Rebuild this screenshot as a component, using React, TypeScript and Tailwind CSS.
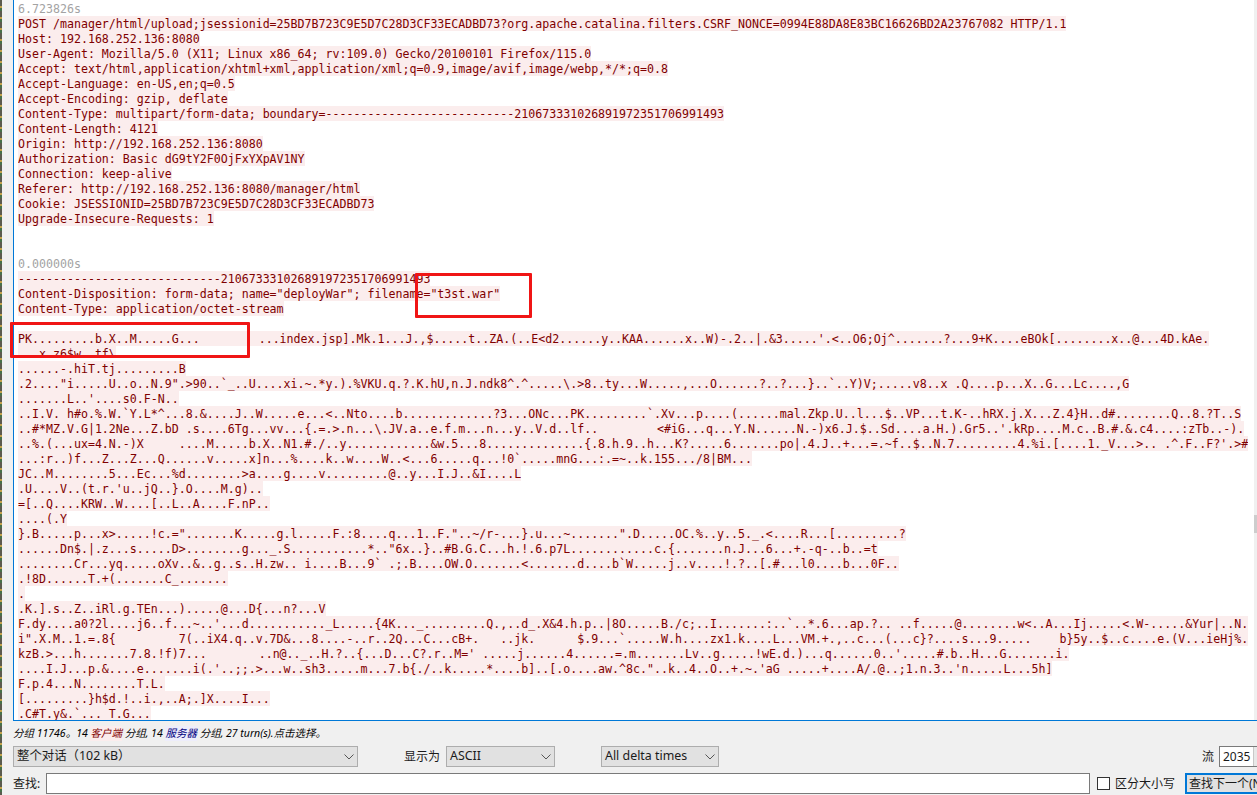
import React from "react";

const rows: string[] = [
  "6.723826s",
  "POST /manager/html/upload;jsessionid=25BD7B723C9E5D7C28D3CF33ECADBD73?org.apache.catalina.filters.CSRF_NONCE=0994E88DA8E83BC16626BD2A23767082 HTTP/1.1",
  "Host: 192.168.252.136:8080",
  "User-Agent: Mozilla/5.0 (X11; Linux x86_64; rv:109.0) Gecko/20100101 Firefox/115.0",
  "Accept: text/html,application/xhtml+xml,application/xml;q=0.9,image/avif,image/webp,*/*;q=0.8",
  "Accept-Language: en-US,en;q=0.5",
  "Accept-Encoding: gzip, deflate",
  "Content-Type: multipart/form-data; boundary=---------------------------210673331026891972351706991493",
  "Content-Length: 4121",
  "Origin: http://192.168.252.136:8080",
  "Authorization: Basic dG9tY2F0OjFxYXpAV1NY",
  "Connection: keep-alive",
  "Referer: http://192.168.252.136:8080/manager/html",
  "Cookie: JSESSIONID=25BD7B723C9E5D7C28D3CF33ECADBD73",
  "Upgrade-Insecure-Requests: 1",
  "",
  "",
  "0.000000s",
  "-----------------------------210673331026891972351706991493",
  "Content-Disposition: form-data; name=\"deployWar\"; filename=\"t3st.war\"",
  "Content-Type: application/octet-stream",
  "",
  "PK.........b.X..M.....G...        \u0001...index.jsp].Mk.1...J.,$.....t..ZA.(..E<d2......y..KAA......x..W)-.2..|.&3.....'.<..O6;Oj^.......?...9+K....eBOk[........x..@...4D.kAe.",
  "...x.z6$w..tf\\",
  "......-.hiT.tj.........B",
  ".2....\"i.....U..o..N.9\".>90..`_..U....xi.~.*y.).%VKU.q.?.K.hU,n.J.ndk8^.^.....\\.>8..ty...W.....,...O......?..?...}..`..Y)V;.....v8..x .Q....p...X..G...Lc....,G",
  ".......L..'....s0.F-N..",
  "..I.V. h#o.%.W.`Y.L*^...8.&....J..W.....e...<..Nto....b.............?3...ONc...PK.........`.Xv...p....(......mal.Zkp.U..l...$..VP...t.K-..hRX.j.X...Z.4}H..d#........Q..8.?T..S",
  "..#*MZ.V.G|1.2Ne...Z.bD .s....6Tg...vv...{.=.>.n...\\.JV.a..e.f.m...n...y..V.d..lf..        \u0001<#iG...q...Y.N......N.-)x6.J.$..Sd....a.H.).Gr5..'.kRp....M.c..B.#.&.c4....:zTb..-).",
  "..%.(...ux=4.N.-)X     ....M.....b.X..N1.#./..y............&w.5...8..............{.8.h.9..h...K?.....6.......po|.4.J..+...=.~f..$..N.7.........4.%i.[....1._V...>.. .^.F..F?'.>#",
  "...:r..)f...Z...Z...Q......v.....x]n...%....k..w....W..<...6.....q...!0`.....mnG...:.=~..k.155.../8|BM...",
  "JC..M........5...Ec...%d........>a....g....v.........@..y...I.J..&I....L",
  ".U....V..(t.r.'u..jQ..}.O....M.g)..",
  "=[..Q....KRW..W....[..L..A....F.nP..",
  "....(.Y",
  "}.B.....p...x>.....!c.=\".......K.....g.l.....F.:8....q...1..F.\"..~/r-...}.u...~.......\".D.....OC.%..y..5._.<....R...[.........?",
  "......Dn$.|.z...s.....D>........g..._.S...........*..\"6x..}..#B.G.C...h.!.6.p7L............c.{.......n.J...6...+.-q-..b..=t",
  "........Cr...yq.....oXv..&..g..s..H.zw.. i....B...9` .;.B....OW.O.......<.......d....b`W.....j..v....!.?..[.#...l0....b...0F..",
  ".!8D......T.+(.......C_.......",
  ".",
  ".K.].s..Z..iRl.g.TEn...).....@...D{...n?...V",
  "F.dy....a0?2l....j6..f...~..'...d..........._L.....{4K..._.........Q.,..d_.X&4.h.p..|8O.....B./c;..I.......:..`..*.6...ap.?.. ..f.....@........w<..A...Ij.....<.W-.....&Yur|..N.",
  "i\".X.M..1.=.8{         7(..iX4.q..v.7D&...8....-..r..2Q...C...cB+.   ..jk.      $.9...`.....W.h....zx1.k....L...VM.+.,..c...(...c}?....s...9.....    b}5y..$..c....e.(V...ieHj%.",
  "kzB.>...h.......7.8.!f)7...       \u0001..n@.._..H.?..{...D...C?.r..M=' .....j......4......=.m.......Lv..g.....!wE.d.)...q......0..'.....#.b..H...G.......i.",
  "....I.J...p.&....e.......i(.'..;;.>...w..sh3.....m...7.b{./..k.....*....b]..[.o....aw.^8c.\"..k..4..O..+.~.'aG .....+....A/.@..;1.n.3..'n.....L...5h]",
  "F.p.4...N........T.L.",
  "[.........}h$d.!..i.,..A;.]X....I...",
  ".C#T.y&.`... T.G...",
];

function Chevron() {
  return (
    <svg width="10" height="6" viewBox="0 0 10 6" fill="none" className="shrink-0">
      <path d="M0.5 0.5 L5 5 L9.5 0.5" stroke="#555555" strokeWidth="1" />
    </svg>
  );
}

function Combo({ label, className }: { label: string; className: string }) {
  return (
    <div
      className={
        "h-[21px] shrink-0 flex items-center justify-between bg-[#e1e1e1] border border-[#adadad] pl-[3px] pr-[3px] text-[12.4px] text-[#1a1a1a] " +
        className
      }
    >
      <span className="whitespace-pre">{label}</span>
      <Chevron />
    </div>
  );
}

function Line({ text }: { text: string }) {
  const parts = text.split("\u0001");
  if (parts.length === 1) return <>{text}</>;
  return (
    <>
      {parts[0]}
      <span className="inline-block w-[3px]" />
      {parts[1]}
    </>
  );
}

function Row({ text, index }: { text: string; index: number }) {
  if (text === "") return <div className="h-[15px]" />;
  const ts = index === 0 || index === 17;
  if (ts) {
    return (
      <div className="h-[15px] leading-[16px] overflow-hidden text-[#a3a3a3] whitespace-pre">{text}</div>
    );
  }
  if (index === 23) {
    return (
      <div className="h-[15px]">
        <div className="h-[11px] w-fit overflow-hidden bg-[#fbeded] text-[#7f0000] leading-[16px] whitespace-pre">
          {text}
        </div>
      </div>
    );
  }
  return (
    <div className="h-[15px] w-fit overflow-hidden bg-[#fbeded] text-[#7f0000] leading-[16px] whitespace-pre">
      <Line text={text} />
    </div>
  );
}

export default function App() {
  return (
    <div className="relative w-[1257px] h-[795px] overflow-hidden flex bg-[#f0f0f0] font-['Noto_Sans','Noto_Sans_CJK_SC',sans-serif]">
      <div className="w-[2px] h-full shrink-0 bg-[repeating-linear-gradient(180deg,#5b5b4e_0,#5b5b4e_6px,#c2a14a_6px,#c2a14a_8px,#47704a_8px,#47704a_11px)]" />
      <div className="flex-1 min-w-0 flex flex-col pl-[11px]">
        <div className="h-[721px] shrink-0 flex border-l border-b border-[#0078d7] bg-white">
          <div className="flex-1 min-w-0 overflow-hidden pt-[1px] pl-[4px] font-['DejaVu_Sans_Mono',monospace] text-[11.62px]">
            {rows.map((r, i) => (
              <Row key={i} text={r} index={i} />
            ))}
          </div>
          <div className="w-[3px] shrink-0 bg-[#f0f0f0] pt-[515px]">
            <div className="h-[18px] bg-[#cdcdcd]" />
          </div>
        </div>

        <div className="h-[25px] shrink-0 flex items-center italic text-[10.5px] text-black whitespace-pre">
          <span>分组 11746。14 </span>
          <span className="bg-[#fbeded] text-[#7f0000]">客户端</span>
          <span> 分组, 14 </span>
          <span className="bg-[#ededfb] text-[#00007f]">服务器</span>
          <span> 分组, 27 turn(s).点击选择。</span>
        </div>

        <div className="h-[21px] shrink-0 flex items-center text-[12px] text-[#1a1a1a]">
          <Combo label="整个对话（102 kB）" className="w-[345px]" />
          <span className="ml-[46px] w-[42px] shrink-0">显示为</span>
          <Combo label="ASCII" className="w-[109px]" />
          <Combo label="All delta times" className="ml-[46px] w-[118px]" />
          <span className="ml-auto shrink-0">流</span>
          <div className="ml-[5px] mr-[-2px] w-[40px] h-[21px] shrink-0 flex justify-between bg-white border border-[#7a7a7a] pl-[3px] leading-[19px]">
            <span>2035</span>
            <span className="w-[5px] bg-[#e8e8e8] border-l border-[#c8c8c8]" />
          </div>
        </div>

        <div className="mt-[6px] h-[21px] shrink-0 flex items-center text-[12px] text-[#1a1a1a]">
          <span className="w-[33px] shrink-0">查找:</span>
          <div className="w-[1044px] h-[21px] shrink-0 bg-white border border-[#7a7a7a]" />
          <div className="ml-[7px] w-[13px] h-[13px] shrink-0 bg-white border border-[#333333]" />
          <span className="ml-[5px] w-[60px] shrink-0 whitespace-nowrap">区分大小写</span>
          <div className="ml-[10px] w-[82px] h-[21px] shrink-0 flex items-center bg-[#e1e1e1] border-2 border-[#0078d7] pl-[2px] whitespace-nowrap overflow-hidden">
            查找下一个(N)
          </div>
        </div>
      </div>

      <div className="absolute left-[415px] top-[273px] w-[117px] h-[45px] border-[3px] border-[#f01515] rounded-[1px]" />
      <div className="absolute left-[10px] top-[322px] w-[240px] h-[36px] border-[3px] border-[#f01515] rounded-[1px]" />
    </div>
  );
}
